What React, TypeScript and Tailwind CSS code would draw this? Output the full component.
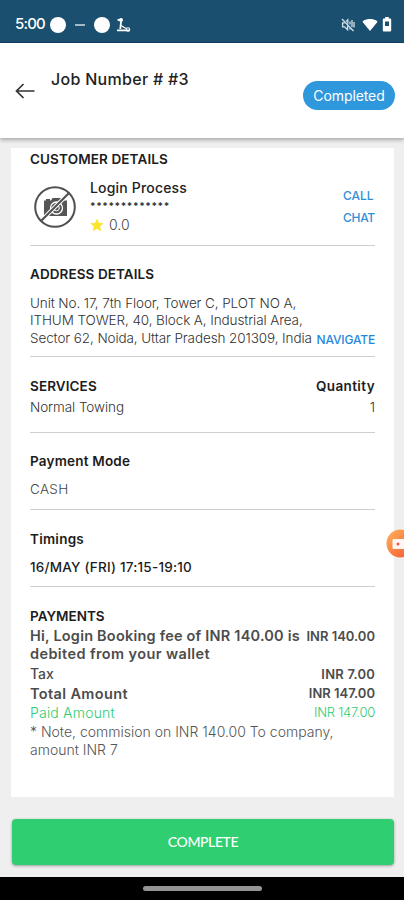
import React from 'react';

const address = [
  'Unit No. 17, 7th Floor, Tower C, PLOT NO A,',
  'ITHUM TOWER, 40, Block A, Industrial Area,',
  'Sector 62, Noida, Uttar Pradesh 201309, India'
];

const Divider = () => <div className="h-px bg-[#cfcfcf]" />;

function StatusBar() {
  return (
    <div className="h-[43px] bg-[#1a4f70] border-b border-[#123f68] flex items-center pt-[7px] pl-[15px] pr-[12px] text-white shrink-0">
      <span className="text-[15px] font-medium tracking-[-0.8px] w-[35px]">5:00</span>
      <span className="w-4 h-4 rounded-full bg-white" />
      <span className="w-[10px] h-[2px] bg-[#a3b9c6] ml-[9px]" />
      <span className="w-4 h-4 rounded-full bg-white ml-[9px]" />
      <svg className="ml-[6px]" width="16" height="16" viewBox="0 0 16 16" fill="none" stroke="white">
        <circle cx="5" cy="3" r="2" fill="white" stroke="none" />
        <path d="M1.5 2.8H4M5 4.5L4.3 12M1 13.4h12.5" strokeWidth="1.8" />
        <path d="M5 8.5l5 3" strokeWidth="1.3" />
        <circle cx="12" cy="12.4" r="1.7" strokeWidth="1.1" />
      </svg>
      <div className="flex-1" />
      <svg width="14" height="14" viewBox="0 0 14 14" fill="none" stroke="#d5e0e7" strokeWidth="1.3">
        <path d="M1 1l11.5 12" />
        <path d="M3.8 4.8H1.6v4h2l3 3V7.4M5 3.4l1.8-1.7v4" />
        <path d="M9 3.5v3M9 10v1.5M11 2v7M13 4v5.5" />
      </svg>
      <svg className="ml-[7px]" width="16" height="14" viewBox="0 0 16 14" fill="white">
        <path d="M8 13L1 4.4C.5 3.7.7 3.2 1.3 2.8 5.2.5 10.8.5 14.7 2.8c.6.4.8.9.3 1.6z" />
      </svg>
      <svg className="ml-[4px]" width="10" height="15" viewBox="0 0 10 15">
        <path d="M3.2 0h3.6v1.5h1.4q1 0 1 1v11q0 1-1 1H1.8q-1 0-1-1v-11q0-1 1-1h1.4z" fill="white" />
        <path d="M3 4.5h4V9H3z" fill="#1a4f70" />
      </svg>
    </div>
  );
}

function Header() {
  return (
    <header className="h-[95px] bg-white flex shrink-0 shadow-[0_2px_4px_rgba(0,0,0,0.3)] relative pl-[15px] pr-[9px]">
      <svg className="mt-[40px]" width="20" height="16" viewBox="0 0 20 16" fill="none" stroke="#333" strokeWidth="1.7">
        <path d="M19.5 8H1.5M8.5 1L1.5 8l7 7" />
      </svg>
      <h1 className="ml-4 mt-[26px] text-base leading-5 font-medium tracking-[0.3px] text-[#222]">Job Number # #3</h1>
      <span className="ml-auto mt-[38px] h-[29px] w-[92px] rounded-full bg-[#2f97dc] text-white text-sm tracking-[-0.1px] flex items-center justify-center">
        Completed
      </span>
    </header>
  );
}

function NoPhoto() {
  return (
    <svg className="ml-[4px] mt-[17px] shrink-0" width="42" height="42" viewBox="0 0 42 42">
      <path d="M10 14.5h2V13h4v1.500h1L18.500 12h8l1.500 2.500h5V30H10z" fill="#555" />
      <circle cx="22.5" cy="22" r="6" fill="#555" stroke="white" strokeWidth="1.3" />
      <circle cx="22.5" cy="22" r="2.8" fill="none" stroke="white" strokeWidth="1" />
      <path d="M34.5 7.5L7.500 34.500" stroke="white" strokeWidth="4" />
      <circle cx="21" cy="21" r="19.8" fill="none" stroke="#505050" strokeWidth="2" />
      <path d="M34.500 7.500L7.500 34.500" stroke="#505050" strokeWidth="2.2" />
    </svg>
  );
}

export default function App() {
  return (
    <div className="w-[404px] h-[900px] bg-[#efefef] flex flex-col overflow-hidden relative font-['Inter',sans-serif] text-[13.5px] text-black">
      <StatusBar />
      <Header />

      <main className="mt-[10px] ml-[11px] w-[383px] h-[649px] bg-white px-[19px] shrink-0">
        <section className="h-[97px]">
          <h2 className="pt-px leading-5 font-semibold tracking-[0.12px] text-[#1c1c1c]">CUSTOMER DETAILS</h2>
          <div className="flex">
            <NoPhoto />
            <div className="ml-[14px] pt-[9px]">
              <p className="text-sm leading-5 font-medium tracking-[0.18px] text-[#222]">Login Process</p>
              <p className="h-[15px] text-[10px] leading-[16px] font-bold tracking-[0.55px] text-[#333] whitespace-nowrap">*************</p>
              <div className="flex items-center h-5 mt-[2px]">
                <svg width="14" height="14" viewBox="0 0 24 24" fill="#fbe42c">
                  <path d="M12 1l3.3 7.500 8.200.7-6.200 5.400 1.900 8L12 18.400 4.800 22.600l1.900-8L.5 9.200l8.200-.7z" />
                </svg>
                <span className="ml-[5px] text-sm font-light text-[#444]">0.0</span>
              </div>
            </div>
            <div className="ml-auto w-[32px] pt-[16px] text-xs leading-[22px] font-medium text-[#2f8fd4]">
              <p>CALL</p>
              <p className="tracking-[-0.3px]">CHAT</p>
            </div>
          </div>
        </section>
        <Divider />

        <section className="h-[110px] pt-[18px]">
          <h2 className="leading-5 font-semibold tracking-[0.08px] text-[#1c1c1c]">ADDRESS DETAILS</h2>
          <div className="mt-[10.5px] flex items-end justify-between">
            <div className="leading-[17.7px] font-light tracking-[-0.1px] text-[#333] whitespace-nowrap">
              {address.map((line) => (
                <p key={line}>{line}</p>
              ))}
            </div>
            <span className="text-xs leading-[17px] font-medium tracking-[-0.15px] text-[#1f88dd]">NAVIGATE</span>
          </div>
        </section>
        <Divider />

        <section className="h-[75px] pt-[19px]">
          <div className="flex justify-between leading-5 font-semibold text-[#1c1c1c]">
            <h2 className="tracking-[0.1px]">SERVICES</h2>
            <span className="tracking-[0.38px]">Quantity</span>
          </div>
          <div className="flex justify-between leading-[22px] font-light text-[#333]">
            <span className="tracking-[-0.07px]">Normal Towing</span>
            <span>1</span>
          </div>
        </section>
        <Divider />

        <section className="h-[76px] pt-[18px]">
          <h2 className="leading-5 font-semibold tracking-[0.2px] text-[#1c1c1c]">Payment Mode</h2>
          <p className="mt-[8px] leading-5 font-light tracking-[0.3px] text-[#444]">CASH</p>
        </section>
        <Divider />

        <section className="h-[76px] pt-[19px]">
          <h2 className="leading-5 font-semibold tracking-[0.25px] text-[#1c1c1c]">Timings</h2>
          <p className="mt-[8px] leading-5 font-medium tracking-[0.22px] text-[#1c1c1c]">16/MAY (FRI) 17:15-19:10</p>
        </section>
        <Divider />

        <section className="pt-[19px]">
          <h2 className="leading-5 font-semibold text-[#1c1c1c]">PAYMENTS</h2>
          <div className="mt-px flex justify-between leading-[18px] font-semibold text-[#4c4c4c] whitespace-nowrap">
            <p className="text-[14.5px]">
              <span className="tracking-[0.21px]">Hi, Login Booking fee of INR 140.00 is</span>
              <br />
              <span className="tracking-[0.4px]">debited from your wallet</span>
            </p>
            <span className="text-[13px]">INR 140.00</span>
          </div>
          <div className="mt-px flex justify-between leading-5 text-[#4c4c4c]">
            <span className="text-sm font-medium">Tax</span>
            <span className="text-[13px] font-semibold tracking-[0.2px]">INR 7.00</span>
          </div>
          <div className="flex justify-between leading-[19px] font-semibold text-[#4c4c4c]">
            <span className="text-[14.5px] tracking-[0.37px]">Total Amount</span>
            <span className="text-[13px]">INR 147.00</span>
          </div>
          <div className="flex justify-between leading-[19px] font-light text-[#2ecc71]">
            <span className="text-sm tracking-[0.2px]">Paid Amount</span>
            <span className="text-[13px] tracking-[-0.25px]">INR 147.00</span>
          </div>
          <p className="text-sm leading-[18px] font-light text-[#555] whitespace-nowrap">
            * Note, commision on INR 140.00 To company,
            <br />
            amount INR 7
          </p>
        </section>
      </main>

      <button className="mt-[22px] ml-[12px] w-[382px] h-[46px] rounded bg-[#2fcf71] shadow-[0_1px_3px_rgba(0,0,0,0.35)] shrink-0 font-['Lato',sans-serif] text-sm font-medium tracking-[-0.4px] text-white">
        COMPLETE
      </button>

      <div className="mt-auto h-[23px] bg-black flex justify-center pt-[9px] shrink-0">
        <span className="w-[119px] h-[5px] rounded-full bg-[#949494]" />
      </div>

      {/* floating screen recorder bubble */}
      <svg className="absolute left-[386px] top-[529px]" width="29" height="29" viewBox="0 0 29 29">
        <defs>
          <linearGradient id="bubble" x1="0" y1="0" x2="1" y2="1">
            <stop offset="0" stopColor="#ffb45c" />
            <stop offset="1" stopColor="#f4522f" />
          </linearGradient>
        </defs>
        <circle cx="14.5" cy="14.5" r="14" fill="url(#bubble)" />
        <rect x="6.5" y="10" width="13" height="10" rx="1" fill="#fff5f0" />
        <circle cx="12" cy="15" r="1.5" fill="#f0584f" />
      </svg>
    </div>
  );
}
